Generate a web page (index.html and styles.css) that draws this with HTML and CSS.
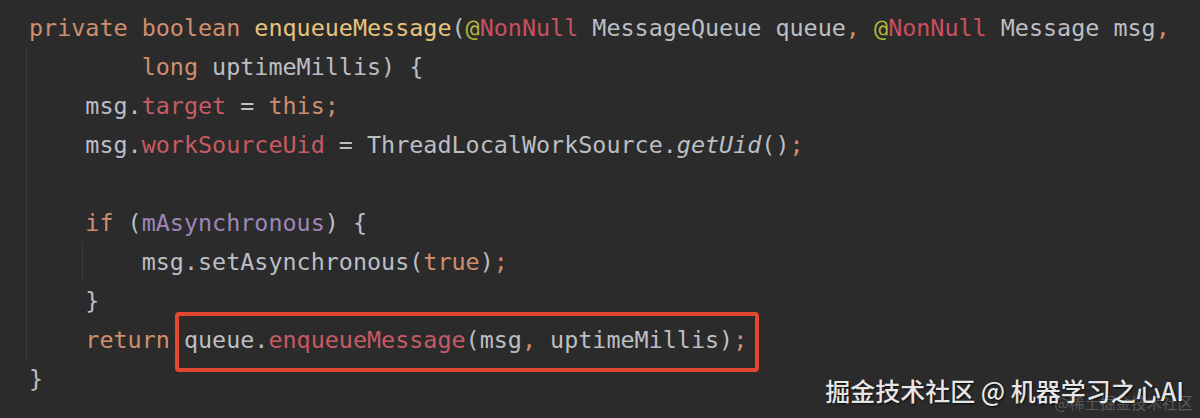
FILE: index.html
```html
<!DOCTYPE html>
<html lang="zh">
<head>
<meta charset="utf-8">
<title>enqueueMessage</title>
<link rel="stylesheet" href="styles.css">
</head>
<body>
<div class="editor">
  <div class="code">
    <div class="line"><span class="kw">private</span> <span class="kw">boolean</span> <span class="decl">enqueueMessage</span>(<span class="at">@</span><span class="ann">NonNull</span> MessageQueue queue<span class="kw">,</span> <span class="at">@</span><span class="ann">NonNull</span> Message msg<span class="kw">,</span></div>
    <div class="block">
      <div class="line">        <span class="kw">long</span> uptimeMillis) {</div>
      <div class="line">    msg.<span class="fld">target</span> = <span class="kw">this;</span></div>
      <div class="line">    msg.<span class="fld">workSourceUid</span> = ThreadLocalWorkSource.<span class="it">getUid</span>()<span class="kw">;</span></div>
      <div class="line"> </div>
      <div class="line">    <span class="kw">if</span> (<span class="pf">mAsynchronous</span>) {</div>
      <div class="block inner">
        <div class="line">    msg.setAsynchronous(<span class="kw">true</span>)<span class="kw">;</span></div>
      </div>
      <div class="line">    }</div>
      <div class="line">    <span class="kw">return</span> <span class="hl">queue.<span class="fld">enqueueMessage</span>(msg<span class="kw">,</span> uptimeMillis)<span class="kw">;</span></span></div>
    </div>
    <div class="line">}</div>
  </div>
  <div class="mark">掘金技术社区 @ 机器学习之心AI</div>
  <div class="mark2">@稀土掘金技术社区</div>
</div>
</body>
</html>
```

FILE: styles.css
```css
html, body {
  margin: 0;
  padding: 0;
  background: #2b2b2c;
}

.editor {
  position: relative;
  width: 1200px;
  height: 418px;
  overflow: hidden;
  background: #2b2b2c;
}

.code {
  padding: 8.5px 0 0 29px;
  font-family: "DejaVu Sans Mono", "Liberation Mono", monospace;
  font-size: 23.4px;
  color: #bcbec4;
}

.line {
  white-space: pre;
  height: 39px;
  line-height: 39px;
}

.block {
  margin-left: -3px;
  padding-left: 2px;
  border-left: 1px solid #3a3a3b;
}

.block.inner {
  margin-left: calc(4ch - 3px);
}

.kw { color: #cf8e6d; }
.decl { color: #e8c27c; }
.at { color: #b3b83a; }
.ann { color: #c9505e; }
.fld { color: #c75a62; }
.pf { color: #9e86b8; }
.it { font-style: italic; }

.hl {
  position: relative;
  display: inline-block;
  height: 39px;
}

.hl::after {
  content: "";
  position: absolute;
  top: -8.5px;
  bottom: -12.5px;
  left: -9px;
  right: -12px;
  border: 4px solid #e4472f;
  border-radius: 4px;
}

.mark {
  position: absolute;
  right: 16px;
  bottom: 10px;
  font-family: "Noto Sans CJK SC", "Noto Sans", sans-serif;
  font-size: 25px;
  font-weight: 500;
  color: #e6e6e6;
  text-shadow: 1px 1px 2px rgba(0, 0, 0, 0.8);
  white-space: nowrap;
}

.mark2 {
  position: absolute;
  right: 7px;
  bottom: 5px;
  font-family: "Noto Sans CJK SC", "Noto Sans", sans-serif;
  font-size: 15.5px;
  color: rgba(255, 255, 255, 0.22);
  white-space: nowrap;
}
```
